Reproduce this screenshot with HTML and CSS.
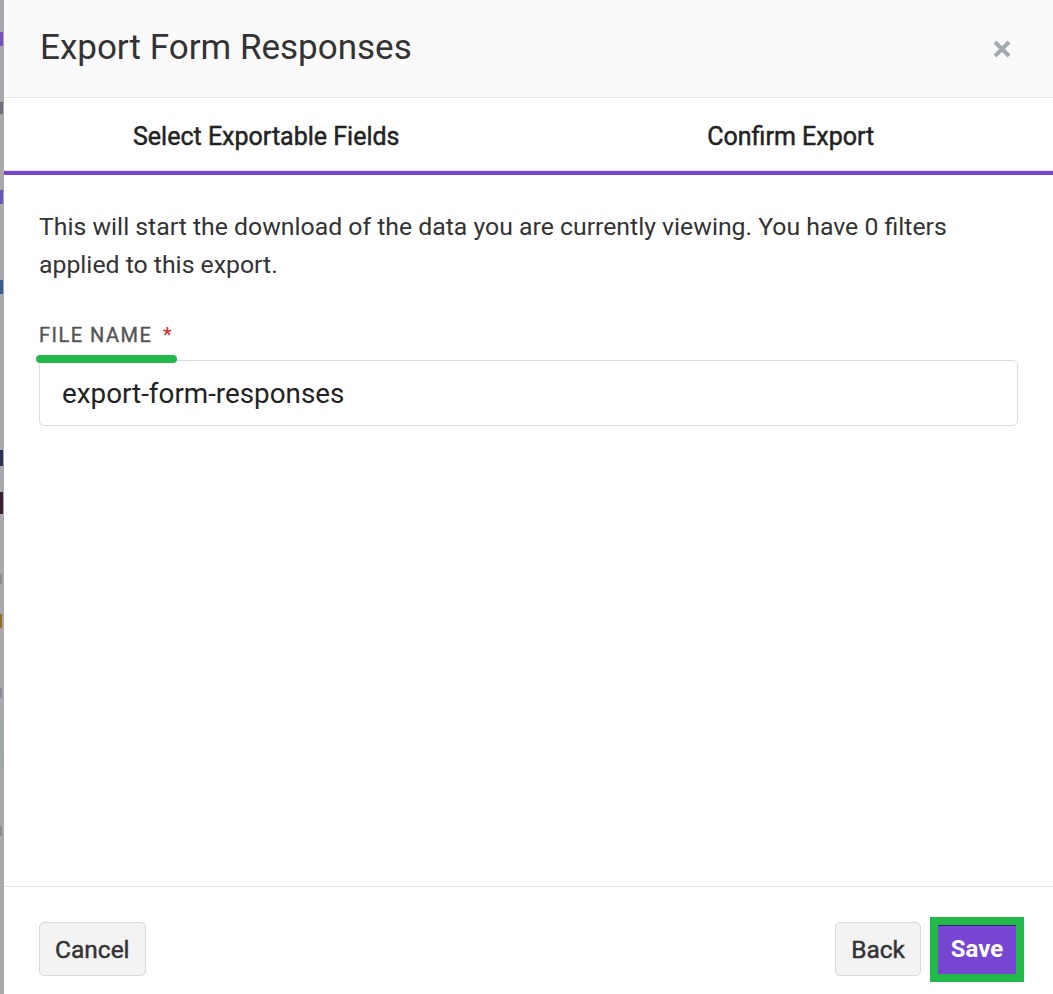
FILE: index.html
```html
<!DOCTYPE html>
<html lang="en">
<head>
    <meta charset="UTF-8">
    <meta name="viewport" content="width=device-width, initial-scale=1.0">
    <title>Export Form Responses</title>
    <link rel="stylesheet" href="styles.css">
</head>
<body>
    <div class="backdrop">
        <span class="mark mark-purple"></span>
        <span class="mark mark-grey"></span>
        <span class="mark mark-purple-sm"></span>
        <span class="mark mark-blue"></span>
        <span class="mark mark-navy"></span>
        <span class="mark mark-red"></span>
        <span class="mark mark-grey-sm"></span>
        <span class="mark mark-orange"></span>
        <span class="mark mark-grey-sm"></span>
        <span class="mark mark-green"></span>
        <span class="mark mark-grey-sm"></span>
    </div>

    <div class="modal">
        <div class="modal-header">
            <h1 class="modal-title">Export Form Responses</h1>
            <button class="close-btn" aria-label="Close">
                <svg width="18" height="18" viewBox="0 0 18 18">
                    <path d="M2 2 L16 16 M16 2 L2 16" stroke="#a3aab1" stroke-width="4" fill="none"/>
                </svg>
            </button>
        </div>

        <div class="tabs">
            <div class="tab">Select Exportable Fields</div>
            <div class="tab">Confirm Export</div>
        </div>

        <div class="modal-body">
            <p class="intro">This will start the download of the data you are currently viewing. You have 0 filters applied to this export.</p>

            <label class="field-label" for="filename">File Name <span class="required">*</span></label>
            <input class="text-input" id="filename" type="text" value="export-form-responses">
        </div>

        <div class="modal-footer">
            <button class="btn">Cancel</button>
            <div class="footer-right">
                <button class="btn">Back</button>
                <button class="btn btn-primary">Save</button>
            </div>
        </div>
    </div>
</body>
</html>
```

FILE: styles.css
```css
        html, body {
            height: 100%;
        }

        body {
            font-family: Roboto, "Noto Sans", Arial, sans-serif;
            background-color: #a9a9ad;
            color: #333;
            display: flex;
            margin: 0;
            overflow: hidden;
        }

        .backdrop {
            width: 4px;
            flex: none;
            display: flex;
            flex-direction: column;
            background-color: #a9a9ad;
        }

        .mark {
            display: block;
            width: 3px;
        }

        .mark-purple { height: 14px; margin-top: 32px; background: #7a4fc4; }
        .mark-grey { height: 12px; margin-top: 56px; background: #6d7077; }
        .mark-purple-sm { height: 14px; margin-top: 76px; background: #6b55c0; }
        .mark-blue { height: 14px; margin-top: 76px; background: #355d96; }
        .mark-navy { height: 16px; margin-top: 156px; background: #2d2f55; }
        .mark-red { height: 22px; margin-top: 26px; background: #3b1f2f; }
        .mark-grey-sm { height: 10px; margin-top: 60px; background: #8c8d92; width: 2px; }
        .mark-orange { height: 14px; margin-top: 30px; background: #9b6a2a; width: 2px; }
        .mark-green { height: 48px; margin-top: 20px; background: #9fa8a2; }

        .modal {
            flex: 1;
            display: flex;
            flex-direction: column;
            background-color: #ffffff;
            min-width: 0;
        }

        .modal-header {
            height: 97px;
            flex: none;
            display: flex;
            align-items: center;
            justify-content: space-between;
            padding: 0 42px 0 36px;
            background-color: #fafafa;
            border-bottom: 1px solid #e7e7e7;
        }

        .modal-title {
            margin: 0;
            font-size: 35px;
            font-weight: 400;
            color: #333;
            padding-bottom: 2px;
        }

        .close-btn {
            border: none;
            background: none;
            padding: 0;
            display: flex;
            cursor: pointer;
        }

        .tabs {
            display: flex;
            flex: none;
            border-bottom: 1px solid #e3e3e3;
            box-shadow: 0 4px 0 #7646d2;
            margin-bottom: 4px;
        }

        /* medium weight: the regular face with a thin stroke */
        .tab {
            flex: 1;
            box-sizing: border-box;
            height: 72px;
            padding-top: 5px;
            display: flex;
            align-items: center;
            justify-content: center;
            font-size: 25px;
            font-weight: 400;
            -webkit-text-stroke: 0.45px #222;
            color: #222;
        }

        .modal-body {
            flex: 1;
            padding: 33px 35px 0 35px;
        }

        .intro {
            margin: 0 0 39px 0;
            font-size: 24.8px;
            line-height: 38px;
            color: #333;
        }

        .field-label {
            position: relative;
            display: inline-block;
            font-size: 20px;
            font-weight: 400;
            -webkit-text-stroke: 0.4px #555;
            letter-spacing: 1.5px;
            text-transform: uppercase;
            color: #555;
            line-height: 24px;
            margin-bottom: 13px;
        }

        /* green review marker under the label */
        .field-label::after {
            content: "";
            position: absolute;
            left: -3px;
            right: -4px;
            bottom: -16px;
            height: 8px;
            border-radius: 4px;
            background-color: #22b94a;
        }

        .required {
            color: #e02020;
            -webkit-text-stroke: 0;
            margin-left: 4px;
        }

        .text-input {
            display: block;
            box-sizing: border-box;
            width: 100%;
            height: 66px;
            padding: 0 22px;
            border: 1px solid #dcdcdf;
            border-radius: 5px;
            font-family: inherit;
            font-size: 27.8px;
            color: #222;
            background: #fff;
            outline: none;
        }

        .modal-footer {
            flex: none;
            box-sizing: border-box;
            height: 108px;
            border-top: 1px solid #e7e7e7;
            display: flex;
            align-items: flex-start;
            justify-content: space-between;
            padding: 35px 37px 0 35px;
        }

        .footer-right {
            display: flex;
            align-items: center;
        }

        .btn {
            height: 54px;
            padding: 0 15px;
            font-family: inherit;
            font-size: 24.5px;
            font-weight: 400;
            -webkit-text-stroke: 0.45px #333;
            color: #333;
            background-color: #f3f3f4;
            border: 1px solid #d9d9dd;
            border-radius: 5px;
            cursor: pointer;
        }

        .btn-primary {
            height: 49px;
            width: 78px;
            padding: 0;
            margin-left: 17px;
            font-size: 24px;
            font-weight: 700;
            -webkit-text-stroke: 0;
            color: #fff;
            background-color: #7646d2;
            border: none;
            border-radius: 0;
            box-shadow: inset 0 1px 0 #2d2570;
            outline: 8px solid #22b94a;
            outline-offset: 0;
        }
```
